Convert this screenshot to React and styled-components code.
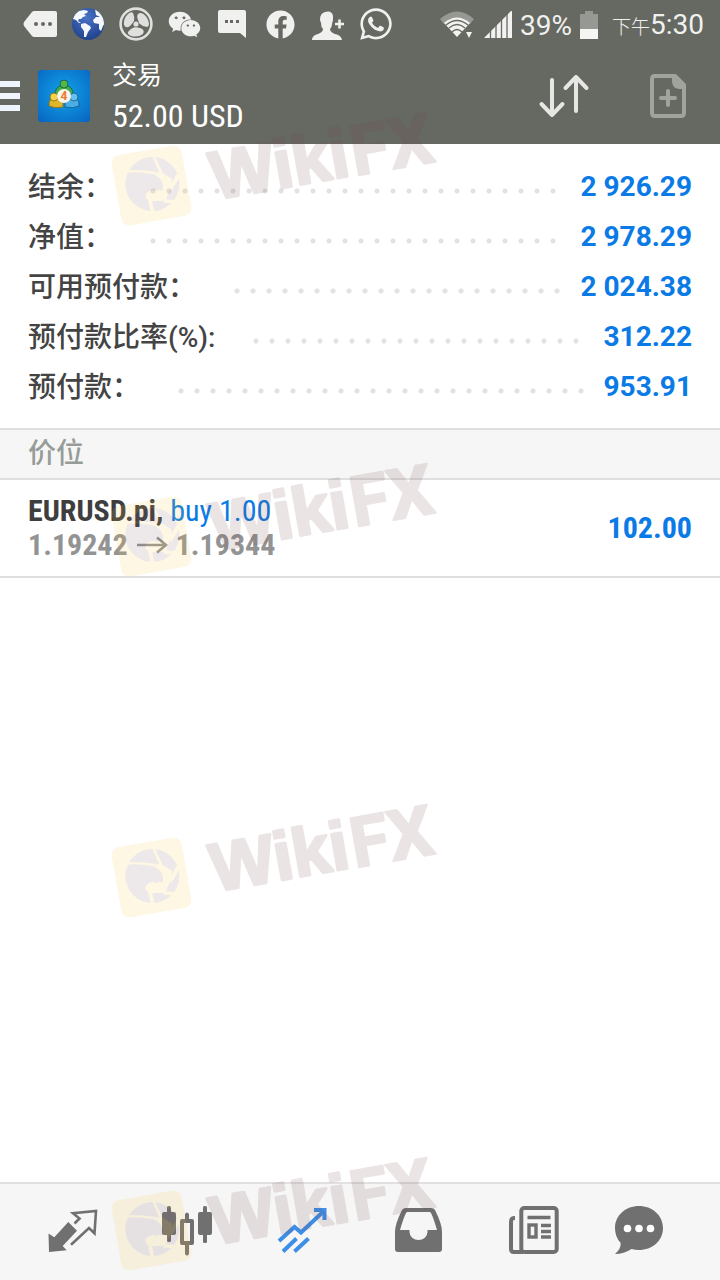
import React from "react";
import styled, { createGlobalStyle } from "styled-components";
import { FaWeixin, FaFacebook, FaWhatsapp } from "react-icons/fa";

const sans = `Roboto, "Noto Sans CJK SC", sans-serif`;
const narrow = `"Roboto Condensed", "Liberation Sans Narrow", Roboto, "Noto Sans CJK SC", sans-serif`;

const GlobalStyle = createGlobalStyle`
  *, *::before, *::after { box-sizing: border-box; }
  body { margin: 0; background: #fff; font-family: ${sans}; }
  h1, h2, p, dl, dd, ul { margin: 0; padding: 0; }
  svg { display: block; flex: none; }
`;

const Page = styled.div`
  position: relative;
  display: flex;
  flex-direction: column;
  min-height: 100vh;
  background: #fff;
  overflow: hidden;
`;

const Header = styled.header`
  background: #666862;
  color: #fff;
`;

const StatusBar = styled.div`
  display: flex;
  align-items: center;
  justify-content: space-between;
  height: 48px;
  padding: 0 16px;
  color: #f0f1ef;
`;

const Notifications = styled.div`
  display: flex;
`;

const Notice = styled.span`
  display: grid;
  place-items: center;
  width: 48px;
  height: 48px;
`;

const SystemInfo = styled.div`
  display: flex;
  align-items: center;
  gap: 8px;
  padding-top: 4px;
  font-size: 28px;
  line-height: 48px;
  white-space: nowrap;
`;

const DayPart = styled.span`
  font-size: 19px;
  font-weight: 300;
`;

const Toolbar = styled.div`
  display: flex;
  align-items: center;
  height: 96px;
  padding-right: 32px;
`;

const IconButton = styled.button`
  display: grid;
  place-items: center;
  padding: 0;
  border: 0;
  background: none;
  color: ${(p) => (p.$dim ? "#a1a39d" : "#e6e7e4")};
  cursor: pointer;
`;

const AppIcon = styled.div`
  margin: 0 22px 0 18px;
`;

const Heading = styled.div`
  flex: 1;
`;

const Title = styled.h1`
  font-size: 25px;
  font-weight: 400;
  line-height: 40px;
`;

const Profit = styled.p`
  font-family: ${narrow};
  font-size: 32px;
  line-height: 40px;
  white-space: nowrap;
`;

const Actions = styled.div`
  display: flex;
  align-items: center;
  gap: 58px;
`;

const Main = styled.main`
  flex: 1;
`;

const Summary = styled.dl`
  padding: 18px 28px 16px;
  border-bottom: 2px solid #dfdfdf;
`;

const SummaryRow = styled.div`
  display: flex;
  align-items: center;
  height: 50px;
  font-size: 28px;
  line-height: 50px;
  white-space: nowrap;
`;

const Label = styled.dt`
  padding-top: 2px;
  color: #444;
  font-weight: 500;
`;

const Dots = styled.span`
  flex: 1;
  height: 6px;
  margin: 8px 16px 0 33px;
  background: radial-gradient(circle at 8px 3px, #e2e2e2 2px, transparent 3px) 0 0 / 16px 6px repeat-x;
`;

const Value = styled.dd`
  color: #0a7be6;
  font-weight: 700;
`;

const SectionTitle = styled.h2`
  height: 50px;
  padding: 0 28px;
  border-bottom: 2px solid #dfdfdf;
  background: #f6f6f6;
  color: #969c98;
  font-size: 28px;
  font-weight: 500;
  line-height: 48px;
`;

const Positions = styled.ul`
  list-style: none;
`;

const Position = styled.li`
  display: flex;
  align-items: center;
  justify-content: space-between;
  padding: 14px 28px;
  border-bottom: 2px solid #dfdfdf;
  font-family: ${narrow};
  font-size: 30px;
  font-weight: 700;
  line-height: 34px;
`;

const Deal = styled.p`
  color: #3e3e3e;
`;

const Order = styled.span`
  color: #0a7be6;
  font-weight: 400;
`;

const Quotes = styled.p`
  display: flex;
  align-items: center;
  gap: 8px;
  color: #939393;
`;

const Result = styled.span`
  color: #0a7be6;
`;

const TabBar = styled.nav`
  display: grid;
  grid-template-columns: repeat(6, 1fr);
  height: 98px;
  padding: 0 14px;
  border-top: 2px solid #e0e0e0;
  background: #f6f6f6;
`;

const Tab = styled.button`
  display: grid;
  place-items: center;
  padding: 0;
  border: 0;
  background: none;
  color: ${(p) => (p.$active ? "#3c8ee8" : "#707070")};
  cursor: pointer;
`;

const WatermarkLayer = styled.div`
  position: absolute;
  inset: 0;
  overflow: hidden;
  pointer-events: none;
`;

const WatermarkSvg = styled.svg`
  position: absolute;
  left: 100px;
  top: ${(p) => p.$top}px;
`;

function Watermark({ top }) {
  return (
    <WatermarkSvg $top={top} width="350" height="140" viewBox="0 0 350 140" aria-hidden="true">
      <g opacity="0.14">
        <rect x="16" y="52" width="71" height="71" rx="8" fill="#fcc846" transform="rotate(-10 51.5 87.5)" />
        <g transform="translate(6 40) scale(0.3333)">
          <circle cx="139" cy="138" r="81" fill="#876070" />
          <g fill="#fcc846">
            <path d="M134 105 L166 102 L198 122 L194 150 L178 188 L136 190 Q116 184 118 170 Q124 158 140 156 L156 160 L156 154 L170 158 Q174 134 160 120 Q148 110 134 105Z" />
            <path d="M54 96 L66 104 Q98 101 134 108 L152 101 L104 97Z" />
            <path d="M138 54 L148 56 L170 104 L160 104Z" />
            <path d="M214 104 L222 116 L196 160 L190 146Z" />
            <path d="M176 184 L214 186 L206 196 L172 194Z" />
            <path d="M124 178 L138 188 L146 222 L134 222Z" />
          </g>
        </g>
        <g transform="translate(113 103) rotate(-10)" fill="#75464a" stroke="#75464a" strokeLinejoin="round" fontWeight="700">
          <text x="2" y="-1" fontFamily="Liberation Sans, sans-serif" fontSize="68" strokeWidth="3">Wiki</text>
          <text x="144" fontFamily="Roboto, sans-serif" fontSize="70" strokeWidth="2">FX</text>
        </g>
      </g>
    </WatermarkSvg>
  );
}

const TagIcon = () => (
  <svg width="36" height="28" viewBox="0 0 36 28">
    <path d="M10 2 Q11 1 12 1 H33 Q35 1 35 3 V25 Q35 27 33 27 H12 Q11 27 10 26 L2 16 Q1 14 2 12Z" fill="currentColor" />
    <g fill="#666862">
      <circle cx="14" cy="14" r="2" />
      <circle cx="21" cy="14" r="2" />
      <circle cx="28" cy="14" r="2" />
    </g>
  </svg>
);

const GlobeIcon = () => (
  <svg width="34" height="34" viewBox="0 0 34 34">
    <defs>
      <radialGradient id="sea" cx="0.45" cy="0.3" r="0.7">
        <stop offset="0" stopColor="#4a72c4" />
        <stop offset="1" stopColor="#20428f" />
      </radialGradient>
      <clipPath id="globe"><circle cx="17" cy="17" r="16" /></clipPath>
    </defs>
    <circle cx="17" cy="17" r="16" fill="url(#sea)" />
    <g clipPath="url(#globe)" fill="#f5f8fc">
      <path d="M2 12 L4 7 L8 4 L13 3 L17 4 L16 6 L13 7 L15 9 L12 10 L10 12 L8 12 L7 14 L10 16 L8 16 L5 13Z" />
      <path d="M10 17 L14 16 L19 19 L20 21 L17 25 L15 30 L13 30 L13 24 L10 20Z" />
      <path d="M24 2 L29 3 L33 10 L34 16 L32 19 L30 24 L28 22 L28 17 L23 16 L22 13 L25 10 L29 10 L25 8Z" />
    </g>
  </svg>
);

const FanIcon = () => (
  <svg width="34" height="34" viewBox="0 0 34 34">
    <circle cx="17" cy="17" r="15.4" fill="none" stroke="#dfe0de" strokeWidth="2.6" />
    <g fill="#dfe0de">
      <path id="blade" d="M15 14 Q16 10 14 6 Q12 4 9 7 Q4 12 5 18 Q7 22 11 19 Q13 17 15 14Z" />
      <use href="#blade" transform="rotate(120 17 17)" />
      <use href="#blade" transform="rotate(240 17 17)" />
      <circle cx="17" cy="17" r="2.6" />
    </g>
  </svg>
);

const MessageIcon = () => (
  <svg width="30" height="30" viewBox="0 0 30 30">
    <path d="M3 1 H27 Q29 1 29 3 V29 L23 24 H3 Q1 24 1 22 V3 Q1 1 3 1Z" fill="currentColor" />
    <g fill="#666862">
      <rect x="8" y="11" width="3" height="3" />
      <rect x="13" y="11" width="3" height="3" />
      <rect x="19" y="11" width="3" height="3" />
    </g>
  </svg>
);

const AddUserIcon = () => (
  <svg width="34" height="34" viewBox="0 0 34 34">
    <path
      d="M1 33 V32 Q2 28 7 27 Q12 25 12 22 Q10 20 10 16 L9 13 Q9 6 14 5 Q21 3 22 9 V13 L21 17 Q21 20 19 22 Q19 25 24 27 Q30 28 31 33Z"
      fill="currentColor"
    />
    <path d="M24 17 H33 M28.500 12.500 V21.500" stroke="currentColor" strokeWidth="2.6" />
  </svg>
);

const WifiIcon = () => (
  <svg width="36" height="30" viewBox="0 0 36 30">
    <path d="M0 8 Q17 -7 34 8 L30 13 Q17 2 4 13Z" fill="#969893" />
    <path d="M4 12 Q17 1 30 12 L17 26Z" fill="#f2f3f1" />
    <g fill="none" stroke="#666862" strokeWidth="1.300">
      <path d="M6 14 Q17 5 28 14" />
      <path d="M9 17 Q17 10 25 17" />
      <path d="M12 21 Q17 16 22 21" />
    </g>
    <path d="M26 21 H32 L29 27Z" fill="#f2f3f1" />
  </svg>
);

const SignalIcon = () => (
  <svg width="28" height="30" viewBox="0 0 28 30">
    <path d="M0 27 L28 -1 V27Z" fill="#f2f3f1" />
    <path d="M6.500 16 V27 M12 10 V27 M17.500 4 V27 M23 0 V27" stroke="#666862" strokeWidth="1.300" />
  </svg>
);

const BatteryIcon = () => (
  <svg width="24" height="30" viewBox="0 0 24 30">
    <path d="M0 3 H5 V0 H13 V3 H18 V19 H0Z" fill="#969893" />
    <path d="M0 18 H18 V28 H0Z" fill="#f5f6f4" />
  </svg>
);

const MenuIcon = () => (
  <svg width="20" height="30" viewBox="0 0 20 30" fill="#eef5fd">
    <rect width="20" height="6" />
    <rect y="12" width="20" height="6" />
    <rect y="24" width="20" height="6" />
  </svg>
);

const TerminalLogo = () => (
  <svg width="52" height="54" viewBox="0 0 52 54" role="img" aria-label="MetaTrader 4">
    <defs>
      <radialGradient id="tile" cx="0.5" cy="0.45" r="0.7">
        <stop offset="0" stopColor="#12a4ea" />
        <stop offset="1" stopColor="#0867c2" />
      </radialGradient>
    </defs>
    <rect y="1" width="52" height="52" rx="3" fill="url(#tile)" />
    <g stroke="#17583a" strokeWidth="0.8">
      <path d="M17 27 Q16 17 26 16 Q36 17 35 27Z" fill="#43ad4a" />
      <circle cx="26" cy="15" r="4" fill="#4fb94c" />
    </g>
    <g stroke="#866a14" strokeWidth="0.8">
      <path d="M11 37 Q10 29 18 28 Q26 30 25 38 Q17 40 11 37Z" fill="#dfb52a" />
      <circle cx="16" cy="28" r="4" fill="#f2d24a" />
    </g>
    <g stroke="#14588c" strokeWidth="0.8">
      <path d="M27 38 Q26 30 34 28 Q42 29 41 37 Q35 40 27 38Z" fill="#4aaee4" />
      <circle cx="36" cy="28" r="4" fill="#63c2ee" />
    </g>
    <circle cx="26" cy="27" r="7" fill="#f6f4ee" />
    <text x="26" y="31" textAnchor="middle" fontFamily="Roboto, sans-serif" fontSize="12" fontWeight="700" fill="#ee7a28">4</text>
  </svg>
);

const SortIcon = () => (
  <svg width="52" height="48" viewBox="0 0 52 48" fill="none" stroke="currentColor" strokeWidth="4" strokeLinecap="round" strokeLinejoin="round">
    <path d="M14 8 V43 M3.500 32 L14 43 L24.500 32" />
    <path d="M38 39 V5 M27.500 16 L38 5 L48.500 16" />
  </svg>
);

const NewOrderIcon = () => (
  <svg width="40" height="48" viewBox="0 0 40 48" fill="none" stroke="currentColor" strokeWidth="4" strokeLinejoin="round">
    <path d="M7 4 H27 L36 13 V41 Q36 44 33 44 H7 Q4 44 4 41 V7 Q4 4 7 4Z" />
    <path d="M24 4 L36 14 V17 H31 Q24 16 24 9Z" fill="currentColor" stroke="none" />
    <path d="M13 26 H27 M20 19 V33" strokeLinecap="round" />
  </svg>
);

const QuotesIcon = () => (
  <svg width="52" height="52" viewBox="0 0 52 52">
    <path d="M2.500 27.500 L8.300 31.300 L22.300 16 L31 24.700 L16.700 40 L20.700 44.300 L3 46Z" fill="currentColor" />
    <path d="M28.500 17.500 L33.500 12.500 L27 7.300 L50 5 L48.500 27.300 L43 22 L25 38.700" fill="none" stroke="currentColor" strokeWidth="2.600" />
  </svg>
);

const ChartIcon = () => (
  <svg width="52" height="52" viewBox="0 0 52 52" fill="currentColor">
    <rect x="1" y="6" width="14" height="23" rx="2" />
    <rect x="6" y="0" width="4" height="36" rx="1.500" />
    <path d="M21 13 H24 V8 Q26 5 28 8 V13 H31 Q33 13 33 15 V37 Q33 39 31 39 H28 V48 Q26 51 24 48 V39 H21 Q19 39 19 37 V15 Q19 13 21 13Z M23 17 V35 H29 V17Z" fillRule="evenodd" />
    <rect x="37" y="6" width="14" height="23" rx="2" />
    <rect x="42" y="0" width="4" height="37" rx="1.500" />
  </svg>
);

const TradeIcon = () => (
  <svg width="52" height="52" viewBox="0 0 52 52" fill="none" stroke="currentColor" strokeWidth="4">
    <path d="M3 35 L18.500 21 L25 26.500 L49 4" />
    <path d="M38 4 H48.500 V14" />
    <path d="M20.500 32.500 L7 45.500 M32.500 32.500 L18.500 45.500" />
  </svg>
);

const InboxIcon = () => (
  <svg width="52" height="52" viewBox="0 0 52 52">
    <path
      d="M14 2 H39 Q42 2 43 4 Q50 18 50 26 V43 Q50 46 47 46 H6 Q3 46 3 43 V26 Q3 18 10 4 Q11 2 14 2Z M15 6 Q13 7 8 24 H17.500 V26 A9 8 0 0 0 35.500 26 V24 H45 Q40 7 38 6Z"
      fill="currentColor"
      fillRule="evenodd"
    />
  </svg>
);

const NewsIcon = () => (
  <svg width="52" height="52" viewBox="0 0 52 52" fill="none" stroke="currentColor" strokeWidth="4">
    <rect x="14.300" y="2" width="35.400" height="44" rx="3" />
    <path d="M8 12 H7 Q4 12 4 16 V43 Q4 46 7 46 H16" />
    <path d="M20.500 11.500 H43.500 M34 19.500 H44 M34 25.500 H44 M34 31 H44" strokeWidth="3.600" />
    <rect x="22" y="19" width="7" height="12" strokeWidth="3.400" />
  </svg>
);

const ChatIcon = () => (
  <svg width="66" height="52" viewBox="0 0 66 52">
    <path d="M24 0 C37 0 48 9 48 22 C48 35 37 44 24 44 Q20 44 16.500 43 Q9 48 0 48 Q6 43 5.700 37 Q0 31 0 22 C0 9 11 0 24 0Z" fill="currentColor" />
    <g fill="#fff">
      <circle cx="12.500" cy="22.500" r="3.800" />
      <circle cx="24" cy="22.500" r="3.800" />
      <circle cx="35.500" cy="22.500" r="3.800" />
    </g>
  </svg>
);

const balances = [
  ["结余：", "2 926.29"],
  ["净值：", "2 978.29"],
  ["可用预付款：", "2 024.38"],
  ["预付款比率(%):", "312.22"],
  ["预付款：", "953.91"],
];

const notices = [
  <TagIcon />,
  <GlobeIcon />,
  <FanIcon />,
  <FaWeixin size={33} />,
  <MessageIcon />,
  <FaFacebook size={29} />,
  <AddUserIcon />,
  <FaWhatsapp size={36} />,
];

const tabs = [
  ["行情", QuotesIcon],
  ["图表", ChartIcon],
  ["交易", TradeIcon],
  ["历史", InboxIcon],
  ["新闻", NewsIcon],
  ["消息", ChatIcon],
];

export default function App() {
  return (
    <Page lang="zh-CN">
      <GlobalStyle />
      <Header>
        <StatusBar>
          <Notifications>
            {notices.map((icon, i) => (
              <Notice key={i}>{icon}</Notice>
            ))}
          </Notifications>
          <SystemInfo>
            <WifiIcon />
            <SignalIcon />
            <span>39%</span>
            <BatteryIcon />
            <time dateTime="17:30"><DayPart>下午</DayPart>5:30</time>
          </SystemInfo>
        </StatusBar>
        <Toolbar>
          <IconButton aria-label="菜单"><MenuIcon /></IconButton>
          <AppIcon><TerminalLogo /></AppIcon>
          <Heading>
            <Title>交易</Title>
            <Profit>52.00 USD</Profit>
          </Heading>
          <Actions>
            <IconButton aria-label="排序"><SortIcon /></IconButton>
            <IconButton $dim aria-label="新订单"><NewOrderIcon /></IconButton>
          </Actions>
        </Toolbar>
      </Header>
      <Main>
        <Summary>
          {balances.map(([label, value]) => (
            <SummaryRow key={label}>
              <Label>{label}</Label>
              <Dots />
              <Value>{value}</Value>
            </SummaryRow>
          ))}
        </Summary>
        <SectionTitle>价位</SectionTitle>
        <Positions>
          <Position>
            <div>
              <Deal>EURUSD.pi, <Order>buy 1.00</Order></Deal>
              <Quotes>
                <span>1.19242</span>
                <svg width="32" height="18" viewBox="0 0 32 18" fill="none" stroke="currentColor" strokeWidth="2.600" aria-label="→">
                  <path d="M1 9 H30 M21 1.500 L30 9 L21 16.500" />
                </svg>
                <span>1.19344</span>
              </Quotes>
            </div>
            <Result>102.00</Result>
          </Position>
        </Positions>
      </Main>
      <TabBar>
        {tabs.map(([name, Icon]) => (
          <Tab key={name} aria-label={name} $active={Icon === TradeIcon}>
            <Icon />
          </Tab>
        ))}
      </TabBar>
      <WatermarkLayer>
        <Watermark top={98} />
        <Watermark top={449} />
        <Watermark top={790} />
        <Watermark top={1143} />
      </WatermarkLayer>
    </Page>
  );
}
